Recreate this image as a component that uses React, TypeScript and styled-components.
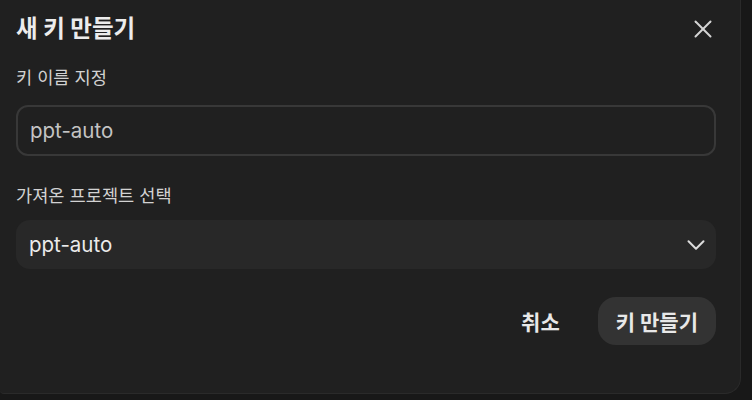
import React from 'react';
import styled, { createGlobalStyle } from 'styled-components';
import { X, ChevronDown } from 'lucide-react';

const GlobalStyle = createGlobalStyle`
  html, body {
    margin: 0;
    padding: 0;
    background: #181818;
    font-family: Inter, "Noto Sans CJK KR", sans-serif;
  }
  * {
    box-sizing: border-box;
  }
`;

const Dialog = styled.div`
  width: 741px;
  height: 394px;
  background: #202020;
  border-right: 1px solid #2a2a2a;
  border-bottom: 1px solid #2a2a2a;
  border-radius: 0 0 16px 4px;
  padding: 14px 24px 0 16px;
  display: flex;
  flex-direction: column;
`;

const Header = styled.div`
  display: flex;
  align-items: center;
  justify-content: space-between;
  height: 30px;
`;

const Title = styled.h2`
  margin: 0;
  font-size: 23.5px;
  font-weight: 700;
  color: #ececec;
  line-height: 30px;
`;

const CloseButton = styled.button`
  background: none;
  border: none;
  padding: 0;
  margin-right: -2px;
  color: #d4d4d4;
  display: flex;
  cursor: pointer;
`;

const Field = styled.div<{ $top: number; $gap: number }>`
  margin-top: ${(p) => p.$top}px;
  display: flex;
  flex-direction: column;
  gap: ${(p) => p.$gap}px;
`;

const Label = styled.label`
  font-size: 17.6px;
  line-height: 24px;
  color: #d2d2d2;
`;

const TextInput = styled.div`
  height: 51px;
  border: 2px solid #383838;
  border-radius: 12px;
  padding: 0 12px;
  display: flex;
  align-items: center;
  font-size: 20.5px;
  color: #c4c4c4;
`;

const Select = styled.div`
  height: 49px;
  background: #282828;
  border-radius: 14px;
  padding: 0 5px 0 13px;
  display: flex;
  align-items: center;
  justify-content: space-between;
  font-size: 20.5px;
  color: #ebebeb;
`;

const Footer = styled.div`
  margin-top: 28px;
  display: flex;
  justify-content: flex-end;
  align-items: center;
  gap: 18px;
`;

const Button = styled.button<{ $primary?: boolean }>`
  height: 48px;
  border: none;
  border-radius: 18px;
  padding: 0 ${(p) => (p.$primary ? 18 : 20)}px;
  background: ${(p) => (p.$primary ? '#333333' : 'transparent')};
  color: #e8e8e8;
  font-family: inherit;
  font-size: 21px;
  font-weight: 700;
  cursor: pointer;
`;

const App: React.FC = () => {
  return (
    <>
      <GlobalStyle />
      <Dialog>
        <Header>
          <Title>새 키 만들기</Title>
          <CloseButton aria-label="닫기">
            <X size={30} strokeWidth={1.6} />
          </CloseButton>
        </Header>

        <Field $top={22} $gap={15}>
          <Label>키 이름 지정</Label>
          <TextInput>ppt-auto</TextInput>
        </Field>

        <Field $top={28} $gap={12}>
          <Label>가져온 프로젝트 선택</Label>
          <Select>
            <span>ppt-auto</span>
            <ChevronDown size={30} strokeWidth={1.6} color="#dcdcdc" />
          </Select>
        </Field>

        <Footer>
          <Button>취소</Button>
          <Button $primary>키 만들기</Button>
        </Footer>
      </Dialog>
    </>
  );
};

export default App;
